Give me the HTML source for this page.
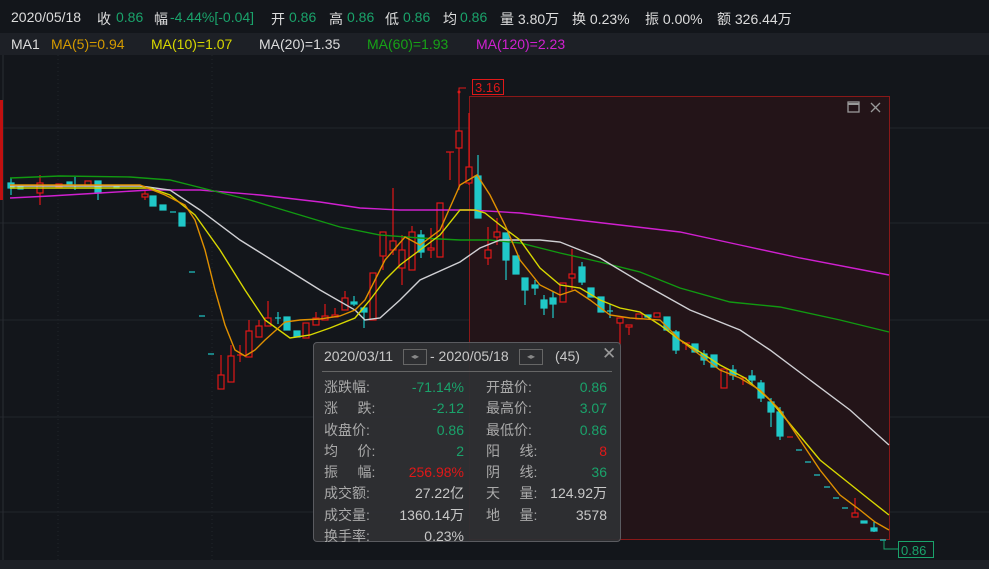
<!DOCTYPE html>
<html><head><meta charset="utf-8"><style>
body{margin:0;width:989px;height:569px;background:#13161b;overflow:hidden;font-family:"Liberation Sans","Noto Sans CJK SC",sans-serif;position:relative}
.t{position:absolute;font-size:14px;white-space:nowrap;color:#ddd}
.g{color:#1aa36b}.r{color:#e01818}
#ma{position:absolute;left:0;top:33px;width:989px;height:22px;background:#1d2026}
#tip{position:absolute;left:313px;top:342px;width:306px;height:198px;background:rgba(46,47,51,0.95);border:1px solid #5a5b60;border-radius:4px;font-size:14px;color:#c8c8c8}
#tip div{position:absolute;white-space:nowrap}
.lb{color:#aaa}
</style></head><body>
<div class="t" style="left:11px;top:9px">2020/05/18</div>
<div class="t" style="left:97px;top:9px">收</div><div class="t g" style="left:116px;top:9px">0.86</div>
<div class="t" style="left:154px;top:9px">幅</div><div class="t g" style="left:170px;top:9px">-4.44%[-0.04]</div>
<div class="t" style="left:271px;top:9px">开</div><div class="t g" style="left:289px;top:9px">0.86</div>
<div class="t" style="left:329px;top:9px">高</div><div class="t g" style="left:347px;top:9px">0.86</div>
<div class="t" style="left:385px;top:9px">低</div><div class="t g" style="left:403px;top:9px">0.86</div>
<div class="t" style="left:443px;top:9px">均</div><div class="t g" style="left:460px;top:9px">0.86</div>
<div class="t" style="left:500px;top:9px">量 3.80万</div>
<div class="t" style="left:572px;top:9px">换 0.23%</div>
<div class="t" style="left:645px;top:9px">振 0.00%</div>
<div class="t" style="left:717px;top:9px">额 326.44万</div>
<div id="ma"></div>
<div class="t" style="left:11px;top:36px">MA1</div>
<div class="t" style="left:51px;top:36px;color:#d49a00">MA(5)=0.94</div>
<div class="t" style="left:151px;top:36px;color:#d8d800">MA(10)=1.07</div>
<div class="t" style="left:259px;top:36px;color:#ddd">MA(20)=1.35</div>
<div class="t" style="left:367px;top:36px;color:#17a317">MA(60)=1.93</div>
<div class="t" style="left:476px;top:36px;color:#d020d0">MA(120)=2.23</div>
<svg style="position:absolute;left:0;top:0" width="989" height="569">
<g stroke="#22252b" stroke-width="1">
<line x1="0" y1="128" x2="989" y2="128"/><line x1="0" y1="223" x2="989" y2="223"/><line x1="0" y1="320" x2="989" y2="320"/><line x1="0" y1="417" x2="989" y2="417"/><line x1="0" y1="512" x2="989" y2="512"/>
<line x1="58" y1="55" x2="58" y2="560" stroke-dasharray="1,3"/><line x1="212" y1="55" x2="212" y2="560" stroke-dasharray="1,3"/>
</g>
<line x1="3" y1="55" x2="3" y2="560" stroke="#2a2d33"/>
<rect x="0" y="100" width="3" height="100" fill="#c01010"/>
<rect x="469.5" y="96.5" width="420" height="443" fill="#231418" stroke="#8a1818"/>
<rect x="848" y="102" width="11" height="10" fill="none" stroke="#999" stroke-width="1.3"/><line x1="848" y1="104" x2="859" y2="104" stroke="#999" stroke-width="2"/>
<path d="M871 103l9 9M880 103l-9 9" stroke="#999" stroke-width="1.3"/>
<g stroke="#e01818" fill="#13161b" stroke-width="1.2">
<line x1="40" y1="175" x2="40" y2="205"/><rect x="37" y="183" width="6" height="10"/>
<rect x="56" y="184" width="6" height="3"/><rect x="85" y="181" width="6" height="5"/>
<line x1="145" y1="190" x2="145" y2="200"/><rect x="142" y="194" width="6" height="3"/>
<line x1="221" y1="355" x2="221" y2="389"/><rect x="218" y="375" width="6" height="14"/>
<line x1="231" y1="345" x2="231" y2="382"/><rect x="228" y="356" width="6" height="26"/>
<line x1="240" y1="345" x2="240" y2="362"/><line x1="237" y1="355" x2="243" y2="355"/>
<line x1="249" y1="320" x2="249" y2="357"/><rect x="246" y="331" width="6" height="26"/>
<line x1="259" y1="320" x2="259" y2="337"/><rect x="256" y="326" width="6" height="11"/>
<line x1="268" y1="301" x2="268" y2="326"/><rect x="265" y="318" width="6" height="8"/>
<rect x="303" y="323" width="6" height="15"/><line x1="316" y1="312" x2="316" y2="325"/><rect x="313" y="318" width="6" height="7"/>
<line x1="325" y1="304" x2="325" y2="320"/><rect x="322" y="316" width="6" height="4"/><line x1="335" y1="308" x2="335" y2="317"/><rect x="332" y="315" width="6" height="2"/>
<line x1="345" y1="291" x2="345" y2="310"/><rect x="342" y="298" width="6" height="12"/>
<rect x="370" y="273" width="6" height="47"/>
<line x1="383" y1="232" x2="383" y2="270"/><rect x="380" y="232" width="6" height="24"/>
<line x1="393" y1="188" x2="393" y2="255"/><rect x="390" y="241" width="6" height="9"/>
<line x1="402" y1="235" x2="402" y2="285"/><rect x="399" y="250" width="6" height="18"/>
<line x1="412" y1="226" x2="412" y2="270"/><rect x="409" y="232" width="6" height="38"/>
<line x1="431" y1="228" x2="431" y2="258"/><rect x="428" y="248" width="6" height="2"/>
<rect x="437" y="203" width="6" height="54"/>
<line x1="450" y1="152" x2="450" y2="180"/><line x1="446" y1="152" x2="454" y2="152"/>
<line x1="459" y1="92" x2="459" y2="190"/><rect x="456" y="131" width="6" height="17"/>
<line x1="469" y1="113" x2="469" y2="185"/><rect x="466" y="167" width="6" height="16"/>
<line x1="488" y1="227" x2="488" y2="265"/><rect x="485" y="250" width="6" height="8"/>
<line x1="497" y1="218" x2="497" y2="245"/><rect x="494" y="232" width="6" height="5"/>
<rect x="560" y="283" width="6" height="19"/><line x1="572" y1="249" x2="572" y2="290"/><rect x="569" y="274" width="6" height="4"/>
<line x1="620" y1="318" x2="620" y2="345"/><rect x="617" y="318" width="6" height="5"/><line x1="629" y1="325" x2="629" y2="335"/><rect x="626" y="325" width="6" height="2"/>
<rect x="636" y="314" width="6" height="5"/><rect x="654" y="313" width="6" height="4"/>
<line x1="686" y1="343" x2="686" y2="350"/><line x1="682" y1="343" x2="690" y2="343"/>
<rect x="721" y="369" width="6" height="19"/><line x1="743" y1="378" x2="743" y2="385"/><line x1="739" y1="378" x2="747" y2="378"/>
<line x1="787" y1="437" x2="793" y2="437"/><line x1="855" y1="498" x2="855" y2="516"/><rect x="852" y="513" width="6" height="4"/>
</g>
<g fill="#20c8c8" stroke="#20c8c8" stroke-width="1.2">
<rect x="8" y="183" width="6" height="5"/><line x1="11" y1="178" x2="11" y2="195"/><rect x="18" y="186" width="5" height="3"/><rect x="67" y="182" width="5" height="3"/><line x1="75" y1="177" x2="75" y2="190"/><rect x="95" y="181" width="6" height="12"/><line x1="98" y1="181" x2="98" y2="200"/><rect x="114" y="186" width="5" height="2"/>
<rect x="150" y="196" width="6" height="10"/><rect x="160" y="205" width="6" height="5"/><line x1="170" y1="212" x2="176" y2="212"/>
<rect x="179" y="213" width="6" height="13"/><line x1="189" y1="272" x2="195" y2="272"/><line x1="199" y1="316" x2="205" y2="316"/><line x1="208" y1="354" x2="214" y2="354"/>
<line x1="278" y1="312" x2="278" y2="324"/><line x1="275" y1="318" x2="281" y2="318"/><rect x="284" y="317" width="6" height="13"/><rect x="294" y="331" width="6" height="6"/>
<line x1="354" y1="296" x2="354" y2="306"/><rect x="351" y="302" width="6" height="2"/><line x1="364" y1="308" x2="364" y2="328"/><rect x="361" y="308" width="6" height="4"/>
<rect x="418" y="235" width="6" height="17"/><line x1="421" y1="230" x2="421" y2="258"/>
<line x1="478" y1="155" x2="478" y2="218"/><rect x="475" y="176" width="6" height="42"/>
<line x1="506" y1="233" x2="506" y2="280"/><rect x="503" y="233" width="6" height="27"/><rect x="513" y="256" width="6" height="18"/>
<line x1="525" y1="278" x2="525" y2="305"/><rect x="522" y="278" width="6" height="12"/><line x1="535" y1="280" x2="535" y2="295"/><rect x="532" y="285" width="6" height="3"/>
<line x1="544" y1="295" x2="544" y2="315"/><rect x="541" y="300" width="6" height="8"/><line x1="553" y1="292" x2="553" y2="318"/><rect x="550" y="298" width="6" height="6"/>
<line x1="582" y1="262" x2="582" y2="285"/><rect x="579" y="267" width="6" height="15"/><rect x="588" y="288" width="6" height="9"/><rect x="598" y="297" width="6" height="15"/>
<line x1="610" y1="304" x2="610" y2="318"/><line x1="607" y1="311" x2="613" y2="311"/>
<rect x="645" y="315" width="6" height="2"/><rect x="664" y="317" width="6" height="13"/><line x1="676" y1="330" x2="676" y2="354"/><rect x="673" y="332" width="6" height="18"/>
<rect x="692" y="344" width="6" height="8"/><line x1="704" y1="350" x2="704" y2="365"/><rect x="701" y="354" width="6" height="6"/><rect x="711" y="355" width="6" height="12"/>
<line x1="733" y1="365" x2="733" y2="380"/><rect x="730" y="370" width="6" height="5"/><line x1="752" y1="370" x2="752" y2="385"/><rect x="749" y="376" width="6" height="4"/>
<line x1="761" y1="380" x2="761" y2="402"/><rect x="758" y="383" width="6" height="15"/><line x1="771" y1="398" x2="771" y2="427"/><rect x="768" y="402" width="6" height="10"/>
<line x1="780" y1="407" x2="780" y2="440"/><rect x="777" y="412" width="6" height="24"/>
<line x1="796" y1="450" x2="802" y2="450"/><line x1="805" y1="462" x2="811" y2="462"/><line x1="814" y1="475" x2="820" y2="475"/><line x1="824" y1="487" x2="830" y2="487"/><line x1="833" y1="498" x2="839" y2="498"/><line x1="842" y1="508" x2="848" y2="508"/>
<rect x="861" y="521" width="6" height="2"/><line x1="874" y1="522" x2="874" y2="532"/><rect x="871" y="528" width="6" height="3"/><line x1="880" y1="540" x2="886" y2="540"/>
</g>
<g fill="none" stroke-width="1.4">
<polyline stroke="#d020d0" points="10,198 50,196 100,193 150,190 200,190 260,195 320,202 360,208 400,210 470,210 520,213 560,218 620,225 680,232 740,245 800,258 889,275"/>
<polyline stroke="#119911" points="10,178 60,176 130,177 170,180 210,190 250,200 300,215 340,227 380,235 420,238 460,240 490,240 520,243 560,253 600,262 640,272 680,288 730,302 780,307 840,320 889,332"/>
<polyline stroke="#d0d0d4" points="10,186 140,186 170,190 200,210 240,240 280,265 320,290 355,310 365,320 380,318 400,300 420,280 460,262 480,248 500,240 540,240 560,242 600,258 640,282 690,310 740,330 770,350 810,380 850,410 889,445"/>
<polyline stroke="#d8d800" points="10,188 150,188 170,195 195,215 220,250 245,290 265,320 290,338 310,335 330,328 355,318 370,300 385,280 400,265 420,250 440,235 460,210 475,210 485,213 500,225 520,240 540,268 560,285 580,288 600,300 620,308 640,312 660,325 680,340 700,352 720,365 745,378 770,400 795,430 820,460 845,480 870,500 889,515"/>
<polyline stroke="#e09000" points="10,185 140,185 165,195 185,205 195,220 205,250 215,290 225,325 235,350 245,356 255,350 265,340 285,322 300,320 320,319 340,316 355,310 365,300 385,260 405,237 420,245 440,230 460,185 477,175 490,195 505,225 520,260 540,285 560,295 575,290 590,300 610,315 630,318 660,320 680,340 700,355 720,370 740,378 760,390 780,410 800,440 820,470 840,495 860,510 875,522 889,530"/>
</g>
<path d="M459 92 V88 H466" stroke="#e01818" fill="none"/><circle cx="459" cy="92" r="1.5" fill="#e01818"/>
<rect x="472.5" y="79.5" width="31" height="15" fill="#13161b" stroke="#e01818"/>
<text x="475" y="92" fill="#e01818" font-size="13" font-family="Liberation Sans">3.16</text>
<path d="M884 540 V549 H898" stroke="#1aa36b" fill="none"/>
<rect x="898.5" y="541.5" width="35" height="16" fill="#13161b" stroke="#1aa36b"/>
<text x="901" y="555" fill="#1aa36b" font-size="13" font-family="Liberation Sans">0.86</text>
<rect x="0" y="560" width="989" height="9" fill="#1d2026"/>
</svg>
<div id="tip">
<div style="left:10px;top:5px">2020/03/11</div>
<div style="left:89px;top:6px;width:22px;height:14px;border:1px solid #666;color:#888;font-size:8px;line-height:14px;text-align:center">◂▸</div>
<div style="left:116px;top:5px">- 2020/05/18</div>
<div style="left:205px;top:6px;width:22px;height:14px;border:1px solid #666;color:#888;font-size:8px;line-height:14px;text-align:center">◂▸</div>
<div style="left:241px;top:5px">(45)</div>
<div style="left:288px;top:1px;font-size:17px;color:#999">✕</div>
<div style="left:8px;top:28px;width:290px;height:1px;background:#666"></div>
<div class="lb" style="left:10px;top:34px;line-height:21.3px">涨跌幅:<br>涨&nbsp;&nbsp;&nbsp;&nbsp;&nbsp;跌:<br>收盘价:<br>均&nbsp;&nbsp;&nbsp;&nbsp;&nbsp;价:<br>振&nbsp;&nbsp;&nbsp;&nbsp;&nbsp;幅:<br>成交额:<br>成交量:<br>换手率:</div>
<div style="right:156px;top:34px;line-height:21.3px;text-align:right"><span class="g">-71.14%</span><br><span class="g">-2.12</span><br><span class="g">0.86</span><br><span class="g">2</span><br><span class="r">256.98%</span><br>27.22亿<br>1360.14万<br>0.23%</div>
<div class="lb" style="left:172px;top:34px;line-height:21.3px">开盘价:<br>最高价:<br>最低价:<br>阳&nbsp;&nbsp;&nbsp;&nbsp;&nbsp;线:<br>阴&nbsp;&nbsp;&nbsp;&nbsp;&nbsp;线:<br>天&nbsp;&nbsp;&nbsp;&nbsp;&nbsp;量:<br>地&nbsp;&nbsp;&nbsp;&nbsp;&nbsp;量:</div>
<div style="right:13px;top:34px;line-height:21.3px;text-align:right"><span class="g">0.86</span><br><span class="g">3.07</span><br><span class="g">0.86</span><br><span class="r">8</span><br><span class="g">36</span><br>124.92万<br>3578</div>
</div>
</body></html>
